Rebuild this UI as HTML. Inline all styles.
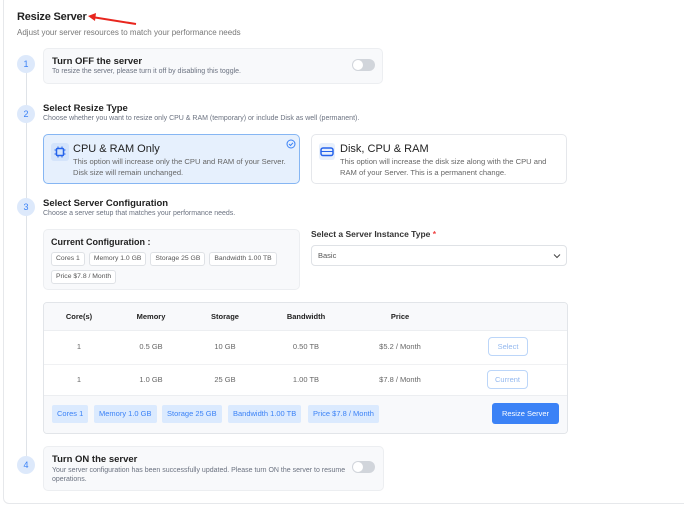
<!DOCTYPE html>
<html><head><meta charset="utf-8"><style>
*{box-sizing:border-box;margin:0;padding:0}
body{width:684px;height:505px;background:#fff;font-family:"Liberation Sans",sans-serif;color:#222;position:relative;overflow:hidden}
.abs{position:absolute}
.outer{left:3px;top:-5px;width:690px;height:509px;border:1px solid #e6e8eb;border-radius:6px}
.circ{width:18px;height:18px;border-radius:50%;background:#dde9fb;color:#3b82f6;font-size:9px;text-align:center;line-height:18px}
.vline{left:26px;top:64px;width:1px;height:400px;background:#dfe3e8}
.card{background:#f8f9fb;border:1px solid #eceef1;border-radius:5px}
.t{font-size:9.5px;font-weight:bold;color:#222}
.s{font-size:7px;color:#6b7280}
.tog{width:23px;height:12px;border-radius:6px;background:#d1d5db}
.tog:after{content:"";position:absolute;left:1px;top:1px;width:10px;height:10px;border-radius:50%;background:#fff}
.chips{display:flex;flex-wrap:wrap;gap:4px 4px}
.chip{font-size:6.8px;color:#555;border:1px solid #dfe2e6;border-radius:3px;background:#fff;padding:0 4px;height:14px;line-height:12px}
.bchip{position:absolute;top:405px;height:18px;line-height:18px;background:#dbeafe;color:#3b82f6;font-size:7.5px;border-radius:2px;padding:0 5px}
.th{position:absolute;top:312px;font-size:7.5px;font-weight:bold;transform:translateX(-50%)}
.td{position:absolute;font-size:7.5px;color:#666;transform:translateX(-50%)}
.ob{position:absolute;border:1px solid #bcd6f9;border-radius:4px;color:#93b8ef;font-size:7.5px;text-align:center;background:#fff}
</style></head><body>
<div class="abs outer"></div>
<div class="abs" style="left:17px;top:11px;font-size:11px;letter-spacing:-0.2px;font-weight:bold;color:#222">Resize Server</div>
<svg class="abs" style="left:86px;top:12px" width="56" height="16"><line x1="6" y1="5" x2="50" y2="12" stroke="#e8261e" stroke-width="2"/><polygon points="2,4 10,1 9,9" fill="#e8261e"/></svg>
<div class="abs" style="left:17px;top:28px;font-size:8px;color:#777">Adjust your server resources to match your performance needs</div>
<div class="abs vline"></div>
<div class="abs circ" style="left:17px;top:55px">1</div>
<div class="abs circ" style="left:17px;top:105px">2</div>
<div class="abs circ" style="left:17px;top:198px">3</div>
<div class="abs circ" style="left:17px;top:456px">4</div>

<div class="abs card" style="left:43px;top:48px;width:340px;height:36px"></div>
<div class="abs t" style="left:52px;top:56px">Turn OFF the server</div>
<div class="abs s" style="left:52px;top:68px">To resize the server, please turn it off by disabling this toggle.</div>
<div class="abs tog" style="left:352px;top:59px"></div>

<div class="abs t" style="left:43px;top:103px">Select Resize Type</div>
<div class="abs s" style="left:43px;top:115px">Choose whether you want to resize only CPU &amp; RAM (temporary) or include Disk as well (permanent).</div>
<div class="abs" style="left:43px;top:134px;width:257px;height:50px;background:#e6f0fd;border:1px solid #86b6f3;border-radius:5px"></div>
<div class="abs" style="left:51px;top:143px;width:18px;height:18px;background:#d4e4fb;border-radius:3px"></div>
<svg class="abs" style="left:54px;top:146px" width="12" height="12"><rect x="2.5" y="2.5" width="7" height="7" rx="1" fill="none" stroke="#2563eb" stroke-width="1.5"/><path d="M4 0.5v2M8 0.5v2M4 9.5v2M8 9.5v2M0.5 4h2M0.5 8h2M9.5 4h2M9.5 8h2" stroke="#2563eb" stroke-width="1"/></svg>
<div class="abs" style="left:73px;top:143px;font-size:11px;color:#222">CPU &amp; RAM Only</div>
<div class="abs" style="left:73px;top:157px;font-size:7.6px;color:#666;line-height:10.5px">This option will increase only the CPU and RAM of your Server.<br>Disk size will remain unchanged.</div>
<svg class="abs" style="left:286px;top:139px" width="10" height="10"><circle cx="5" cy="5" r="4" fill="none" stroke="#3b82f6" stroke-width="1"/><path d="M3 5l1.5 1.5L7 3.8" fill="none" stroke="#3b82f6" stroke-width="1"/></svg>
<div class="abs" style="left:311px;top:134px;width:256px;height:50px;background:#fff;border:1px solid #e5e7eb;border-radius:5px"></div>
<div class="abs" style="left:319px;top:143px;width:16px;height:17px;background:#e8f0fc;border-radius:3px"></div>
<svg class="abs" style="left:320px;top:146px" width="14" height="11"><rect x="1" y="2" width="12" height="7.5" rx="2" fill="none" stroke="#2563eb" stroke-width="1.5"/><line x1="1" y1="5.5" x2="13" y2="5.5" stroke="#2563eb" stroke-width="1"/></svg>
<div class="abs" style="left:340px;top:143px;font-size:11px;color:#222">Disk, CPU &amp; RAM</div>
<div class="abs" style="left:340px;top:157px;font-size:7.6px;color:#666;line-height:10.5px">This option will increase the disk size along with the CPU and<br>RAM of your Server. This is a permanent change.</div>

<div class="abs t" style="left:43px;top:198px">Select Server Configuration</div>
<div class="abs s" style="left:43px;top:210px">Choose a server setup that matches your performance needs.</div>
<div class="abs card" style="left:43px;top:229px;width:257px;height:61px"></div>
<div class="abs" style="left:51px;top:237px;font-size:9px;font-weight:bold">Current Configuration :</div>
<div class="abs chips" style="left:51px;top:252px;width:240px"><span class="chip">Cores 1</span><span class="chip">Memory 1.0 GB</span><span class="chip">Storage 25 GB</span><span class="chip">Bandwidth 1.00 TB</span><span class="chip">Price $7.8 / Month</span></div>
<div class="abs" style="left:311px;top:229px;font-size:8.5px;font-weight:bold;color:#333">Select a Server Instance Type <span style="color:#ef4444">*</span></div>
<div class="abs" style="left:311px;top:245px;width:256px;height:21px;border:1px solid #dfe2e6;border-radius:4px;font-size:7.5px;color:#555;padding:5px 6px">Basic</div>
<svg class="abs" style="left:553px;top:253px" width="8" height="6"><path d="M1 1.5l3 3 3-3" fill="none" stroke="#444" stroke-width="1"/></svg>

<div class="abs" style="left:43px;top:302px;width:525px;height:132px;border:1px solid #e2e5e9;border-radius:4px;background:#fff;overflow:hidden">
<div style="height:28px;background:#f8f9fb;border-bottom:1px solid #eceef1"></div>
<div style="height:34px;border-bottom:1px solid #f0f1f3"></div>
<div style="height:31px;border-bottom:1px solid #eceef1"></div>
<div style="height:39px;background:#f8f9fb"></div>
</div>
<div class="th" style="left:79px">Core(s)</div><div class="th" style="left:151px">Memory</div><div class="th" style="left:225px">Storage</div><div class="th" style="left:306px">Bandwidth</div><div class="th" style="left:400px">Price</div>
<div class="td" style="left:79px;top:342px">1</div><div class="td" style="left:151px;top:342px">0.5 GB</div><div class="td" style="left:225px;top:342px">10 GB</div><div class="td" style="left:306px;top:342px">0.50 TB</div><div class="td" style="left:400px;top:342px">$5.2 / Month</div>
<div class="td" style="left:79px;top:375px">1</div><div class="td" style="left:151px;top:375px">1.0 GB</div><div class="td" style="left:225px;top:375px">25 GB</div><div class="td" style="left:306px;top:375px">1.00 TB</div><div class="td" style="left:400px;top:375px">$7.8 / Month</div>
<div class="ob" style="left:488px;top:337px;width:40px;height:19px;line-height:17px">Select</div>
<div class="ob" style="left:487px;top:370px;width:41px;height:19px;line-height:17px">Current</div>
<div class="bchip" style="left:52px">Cores 1</div>
<div class="bchip" style="left:94px">Memory 1.0 GB</div>
<div class="bchip" style="left:162px">Storage 25 GB</div>
<div class="bchip" style="left:228px">Bandwidth 1.00 TB</div>
<div class="bchip" style="left:308px">Price $7.8 / Month</div>
<div class="abs" style="left:492px;top:403px;width:67px;height:21px;background:#3b82f6;border-radius:3px;color:#fff;font-size:7.5px;text-align:center;line-height:21px">Resize Server</div>

<div class="abs card" style="left:43px;top:446px;width:341px;height:45px"></div>
<div class="abs t" style="left:52px;top:454px">Turn ON the server</div>
<div class="abs s" style="left:52px;top:466px;line-height:9px">Your server configuration has been successfully updated. Please turn ON the server to resume<br>operations.</div>
<div class="abs tog" style="left:352px;top:461px"></div>
</body></html>
